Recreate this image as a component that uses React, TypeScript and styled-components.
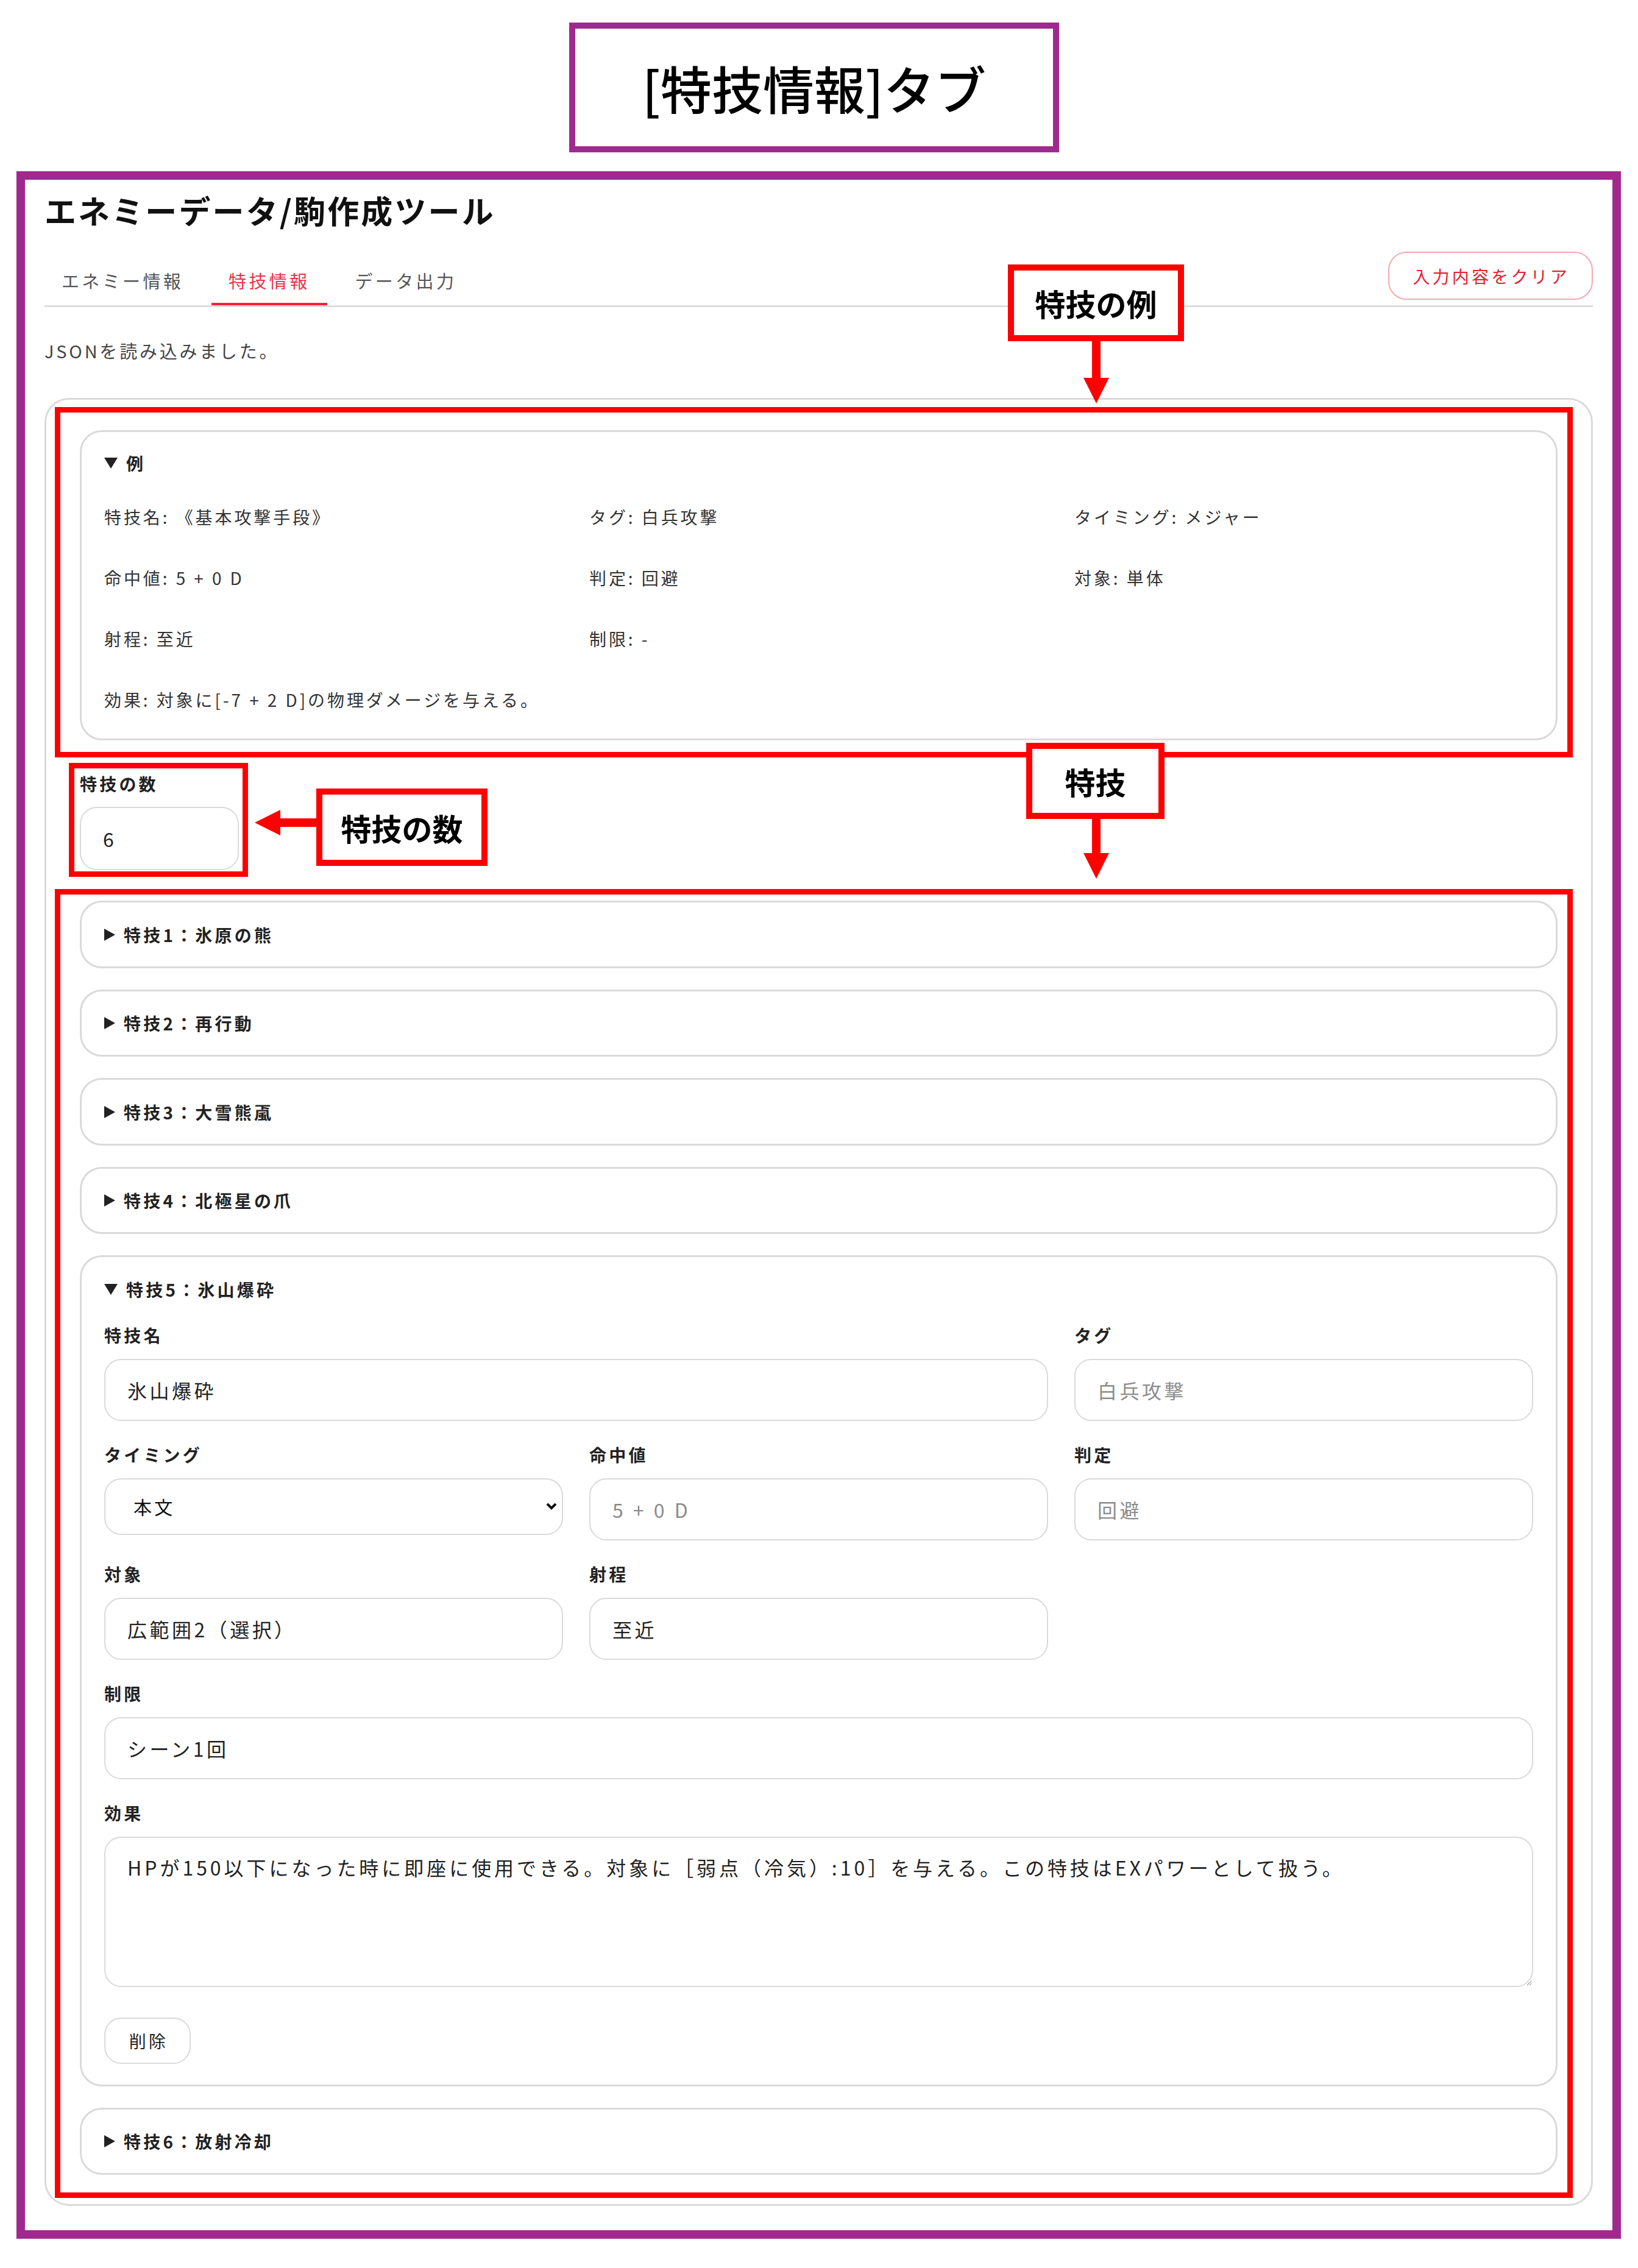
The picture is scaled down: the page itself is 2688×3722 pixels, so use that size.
import React from "react";
import styled, { createGlobalStyle } from "styled-components";

const GlobalStyle = createGlobalStyle`
  html, body {
    margin: 0;
    padding: 0;
    background: #fff;
  }
  body {
    font-family: "Noto Sans CJK JP", "Noto Sans", sans-serif;
    color: #222;
  }
  * {
    box-sizing: border-box;
  }
`;

const PURPLE = "#a0298f";
const RED = "#ff0000";
const LINE = "#dadada";

const Canvas = styled.div`
    position: relative;
    width: 2688px;
    height: 3722px;
    overflow: hidden;
    display: flex;
    flex-direction: column;
    align-items: flex-start;
`

const TitleBox = styled.div`
    margin: 37px 0 0 934px;
    width: 804px;
    height: 213px;
    border: 10px solid ${PURPLE};
    display: flex;
    align-items: center;
    justify-content: center;
    font-size: 84px;
    font-weight: 500;
    color: #000;
`

const Frame = styled.div`
    margin: 31px 0 0 27px;
    width: 2633px;
    border: 14px solid ${PURPLE};
    padding: 19px 32px 40px 32px;
`

const PageTitle = styled.h1`
    margin: 0 0 37px 0;
    font-size: 52px;
    line-height: 62px;
    font-weight: 700;
    letter-spacing: 0.06em;
    color: #111;
`

const TabBar = styled.div`
    display: flex;
    justify-content: space-between;
    align-items: flex-end;
    border-bottom: 3px solid #dddddd;
`

const Tabs = styled.div`
    display: flex;
    gap: 18px;
`

const Tab = styled.button<{ $active?: boolean }>`
    appearance: none;
    background: none;
    border: none;
    border-bottom: 4px solid ${(p) => (p.$active ? "#ff1f3a" : "transparent")};
    padding: 20px 28px 17px;
    font-family: inherit;
    font-size: 29px;
    line-height: 40px;
    letter-spacing: 0.15em;
    color: ${(p) => (p.$active ? "#f0304a" : "#555")};
`

const ClearButton = styled.button`
    height: 79px;
    margin-bottom: 9px;
    padding: 0 36px 0 38px;
    border: 2px solid #f6a9ae;
    border-radius: 30px;
    background: #fff;
    color: #e8202f;
    font-family: inherit;
    font-size: 28px;
    letter-spacing: 0.15em;
`

const Message = styled.p`
    margin: 51px 0 0 0;
    font-size: 29px;
    line-height: 40px;
    letter-spacing: 0.13em;
    color: #444;
`

const Section = styled.div`
    margin-top: 58px;
    border: 3px solid ${LINE};
    border-radius: 40px;
    padding: 50px 55px 48px 55px;
`

const Card = styled.details`
    border: 3px solid ${LINE};
    border-radius: 36px;
    background: #fff;
`

const ExampleCard = styled(Card)`
    padding: 33px 37px 46px 37px;
`

const SkillCard = styled(Card)`
    padding: 34.5px 37px 34px 37px;
`

const Summary = styled.summary`
    display: flex;
    align-items: center;
    gap: 14px;
    list-style: none;
    font-size: 28px;
    line-height: 36px;
    font-weight: 700;
    letter-spacing: 0.15em;
    color: #222;
    cursor: pointer;

    &::-webkit-details-marker {
        display: none;
    }
`

const ExampleGrid = styled.div`
    margin-top: 52px;
    display: grid;
    grid-template-columns: repeat(3, 1fr);
    column-gap: 43px;
    row-gap: 64px;
    font-size: 28px;
    line-height: 36px;
    letter-spacing: 0.14em;
    color: #333;
`

const ExampleItem = styled.div<{ $wide?: boolean }>`
    grid-column: ${(p) => (p.$wide ? "1 / -1" : "auto")};
`

const CountField = styled.div`
    margin-top: 53px;
    display: flex;
    flex-direction: column;
    align-items: flex-start;
    gap: 20px;
`

const SkillList = styled.div`
    margin-top: 50px;
    display: flex;
    flex-direction: column;
    gap: 35px;
`

const FormGrid = styled.div`
    margin-top: 39px;
    display: grid;
    grid-template-columns: repeat(3, 1fr);
    column-gap: 43px;
    row-gap: 37px;
`

const Field = styled.div<{ $span?: number }>`
    grid-column: span ${(p) => p.$span || 1};
    display: flex;
    flex-direction: column;
    gap: 21px;
`

const Label = styled.label`
    font-size: 28px;
    line-height: 36px;
    font-weight: 700;
    letter-spacing: 0.15em;
    color: #222;
`

const TextInput = styled.input<{ $width?: number }>`
    width: ${(p) => (p.$width ? `${p.$width}px` : "100%")};
    height: ${(p) => (p.$width ? "104px" : "102px")};
    border: 2px solid ${LINE};
    border-radius: 28px;
    padding: 0 36px;
    font-family: inherit;
    font-size: 32px;
    letter-spacing: 0.14em;
    color: #222;
    background: #fff;
    outline: none;

    &::placeholder {
        color: #8c8c8c;
    }
    &::-webkit-inner-spin-button,
    &::-webkit-outer-spin-button {
        -webkit-appearance: none;
        margin: 0;
    }
`

const SelectWrap = styled.div`
    position: relative;
    height: 93px;
`

const Select = styled.select`
    appearance: none;
    width: 100%;
    height: 93px;
    border: 2px solid ${LINE};
    border-radius: 28px;
    padding: 0 46px;
    font-family: inherit;
    font-size: 30px;
    font-weight: 400;
    letter-spacing: 0.14em;
    color: #111;
    background: #fff;
    outline: none;
`

const Chevron = styled.svg`
    position: absolute;
    right: 9px;
    top: 39px;
    pointer-events: none;
`

const TextArea = styled.textarea`
    width: 100%;
    height: 247px;
    border: 2px solid ${LINE};
    border-radius: 28px;
    padding: 26px 36px;
    font-family: inherit;
    font-size: 32px;
    line-height: 45px;
    letter-spacing: 0.155em;
    color: #222;
    background: #fff;
    resize: vertical;
    outline: none;
`

const DeleteButton = styled.button`
    margin-top: 50px;
    width: 142px;
    height: 76px;
    border: 2px solid ${LINE};
    border-radius: 28px;
    background: #fff;
    padding: 0 0 0 4px;
    font-family: inherit;
    font-size: 28px;
    letter-spacing: 0.15em;
    color: #222;
`

/* annotation layer: red callouts drawn over the screenshot */

const RedBox = styled.div<{ $x: number; $y: number; $w: number; $h: number }>`
    position: absolute;
    left: ${(p) => p.$x}px;
    top: ${(p) => p.$y}px;
    width: ${(p) => p.$w}px;
    height: ${(p) => p.$h}px;
    border: 9px solid ${RED};
    pointer-events: none;
`

const Callout = styled.div<{ $x: number; $y: number; $w: number; $h: number }>`
    position: absolute;
    left: ${(p) => p.$x}px;
    top: ${(p) => p.$y}px;
    width: ${(p) => p.$w}px;
    height: ${(p) => p.$h}px;
    border: 10px solid ${RED};
    background: #fff;
    display: flex;
    align-items: center;
    justify-content: center;
    font-size: 50px;
    font-weight: 700;
    color: #000;
`

const ArrowSvg = styled.svg<{ $x: number; $y: number }>`
    position: absolute;
    left: ${(p) => p.$x}px;
    top: ${(p) => p.$y}px;
`

const Marker = ({ open }: { open?: boolean }) =>
    open ? (
        <svg width="22" height="18" viewBox="0 0 22 18">
            <polygon points="0,0 22,0 11,18" fill="#222" />
        </svg>
    ) : (
        <svg width="18" height="20" viewBox="0 0 18 20">
            <polygon points="0,0 18,10 0,20" fill="#222" />
        </svg>
    );

const DownArrow = ({ x, y, len }: { x: number; y: number; len: number }) => (
    <ArrowSvg $x={x} $y={y} width="46" height={len + 44} viewBox={`0 0 46 ${len + 44}`}>
        <rect x="16" y="0" width="14" height={len + 2} fill={RED} />
        <polygon points={`2,${len} 44,${len} 23,${len + 42}`} fill={RED} />
    </ArrowSvg>
);

const LeftArrow = ({ x, y }: { x: number; y: number }) => (
    <ArrowSvg $x={x} $y={y} width="106" height="46" viewBox="0 0 106 46">
        <polygon points="2,23 44,2 44,44" fill={RED} />
        <rect x="42" y="16" width="64" height="14" fill={RED} />
    </ArrowSvg>
);

const example = [
    "特技名: 《基本攻撃手段》",
    "タグ: 白兵攻撃",
    "タイミング: メジャー",
    "命中値: 5 + 0 D",
    "判定: 回避",
    "対象: 単体",
    "射程: 至近",
    "制限: -",
];

const skills = ["氷原の熊", "再行動", "大雪熊颪", "北極星の爪", "氷山爆砕", "放射冷却"];

const timings = ["メジャー", "マイナー", "セットアップ", "イニシアチブ", "クリンナップ", "インスタント", "常時", "本文"];

const SkillForm = () => (
    <>
        <FormGrid>
            <Field $span={2}>
                <Label>特技名</Label>
                <TextInput defaultValue="氷山爆砕" />
            </Field>
            <Field>
                <Label>タグ</Label>
                <TextInput placeholder="白兵攻撃" />
            </Field>
            <Field>
                <Label>タイミング</Label>
                <SelectWrap>
                    <Select defaultValue="本文">
                        {timings.map((t) => (
                            <option key={t} value={t}>
                                {t}
                            </option>
                        ))}
                    </Select>
                    <Chevron width="20" height="14" viewBox="0 0 20 14">
                        <polyline points="3,3 10,10 17,3" fill="none" stroke="#111" strokeWidth="4" />
                    </Chevron>
                </SelectWrap>
            </Field>
            <Field>
                <Label>命中値</Label>
                <TextInput placeholder="5 + 0 D" />
            </Field>
            <Field>
                <Label>判定</Label>
                <TextInput placeholder="回避" />
            </Field>
            <Field>
                <Label>対象</Label>
                <TextInput defaultValue="広範囲2（選択）" />
            </Field>
            <Field>
                <Label>射程</Label>
                <TextInput defaultValue="至近" />
            </Field>
            <div />
            <Field $span={3}>
                <Label>制限</Label>
                <TextInput defaultValue="シーン1回" />
            </Field>
            <Field $span={3}>
                <Label>効果</Label>
                <TextArea defaultValue="HPが150以下になった時に即座に使用できる。対象に［弱点（冷気）:10］を与える。この特技はEXパワーとして扱う。" />
            </Field>
        </FormGrid>
        <DeleteButton>削除</DeleteButton>
    </>
);

export default function App() {
    return (
        <>
            <GlobalStyle />
            <Canvas>
                <TitleBox>[特技情報]タブ</TitleBox>

                <Frame>
                    <PageTitle>エネミーデータ/駒作成ツール</PageTitle>
                    <TabBar>
                        <Tabs>
                            <Tab>エネミー情報</Tab>
                            <Tab $active>特技情報</Tab>
                            <Tab>データ出力</Tab>
                        </Tabs>
                        <ClearButton>入力内容をクリア</ClearButton>
                    </TabBar>
                    <Message>JSONを読み込みました。</Message>

                    <Section>
                        <ExampleCard open>
                            <Summary>
                                <Marker open />
                                例
                            </Summary>
                            <ExampleGrid>
                                {example.map((e) => (
                                    <ExampleItem key={e}>{e}</ExampleItem>
                                ))}
                                <ExampleItem $wide>効果: 対象に[-7 + 2 D]の物理ダメージを与える。</ExampleItem>
                            </ExampleGrid>
                        </ExampleCard>

                        <CountField>
                            <Label>特技の数</Label>
                            <TextInput type="number" defaultValue={6} $width={261} />
                        </CountField>

                        <SkillList>
                            {skills.map((name, i) => {
                                const open = i === 4;
                                return (
                                    <SkillCard key={name} open={open}>
                                        <Summary>
                                            <Marker open={open} />
                                            {`特技${i + 1}：${name}`}
                                        </Summary>
                                        {open && <SkillForm />}
                                    </SkillCard>
                                );
                            })}
                        </SkillList>
                    </Section>
                </Frame>

                <RedBox $x={90} $y={668} $w={2491} $h={575} />
                <RedBox $x={90} $y={1459} $w={2491} $h={2148} />
                <RedBox $x={113} $y={1252} $w={294} $h={187} />

                <DownArrow x={1776} y={558} len={62} />
                <DownArrow x={1776} y={1342} len={58} />
                <LeftArrow x={416} y={1327} />

                <Callout $x={1654} $y={434} $w={289} $h={126}>特技の例</Callout>
                <Callout $x={1684} $y={1219} $w={227} $h={125}>特技</Callout>
                <Callout $x={519} $y={1294} $w={281} $h={127}>特技の数</Callout>
            </Canvas>
        </>
    );
}
